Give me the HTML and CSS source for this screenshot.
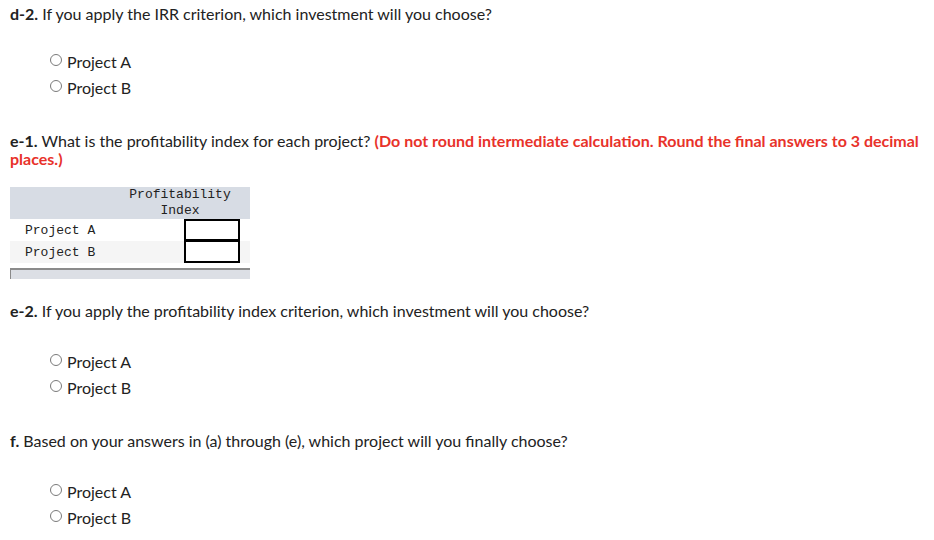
FILE: index.html
```html
<!DOCTYPE html>
<html>
<head>
<meta charset="utf-8">
<link rel="stylesheet" href="styles.css">
</head>
<body>
<div class="page">
  <p class="q q-first"><b>d-2.</b> If you apply the IRR criterion, which investment will you choose?</p>
  <div class="radios r1">
    <label class="radio"><span class="dot"></span>Project A</label>
    <label class="radio"><span class="dot"></span>Project B</label>
  </div>

  <p class="q q-e1"><b>e-1.</b> What is the profitability index for each project? <b class="red">(Do not round intermediate calculation. Round the final answers to 3 decimal places.)</b></p>
  <div class="tablewrap">
    <table class="pi">
      <colgroup><col class="c1"><col class="c2"><col class="c3"><col class="c4"></colgroup>
      <thead>
        <tr><th></th><th colspan="2">Profitability<br>Index</th><th></th></tr>
      </thead>
      <tbody>
        <tr><td class="lab" colspan="2">Project A</td><td><span class="box"></span></td><td></td></tr>
        <tr class="alt"><td class="lab" colspan="2">Project B</td><td><span class="box"></span></td><td></td></tr>
      </tbody>
    </table>
    <div class="scroll"></div>
  </div>

  <p class="q q-e2"><b>e-2.</b> If you apply the profitability index criterion, which investment will you choose?</p>
  <div class="radios r2">
    <label class="radio"><span class="dot"></span>Project A</label>
    <label class="radio"><span class="dot"></span>Project B</label>
  </div>

  <p class="q q-f"><b>f.</b> Based on your answers in (a) through (e), which project will you finally choose?</p>
  <div class="radios r2">
    <label class="radio"><span class="dot"></span>Project A</label>
    <label class="radio"><span class="dot"></span>Project B</label>
  </div>
</div>
</body>
</html>
```
FILE: styles.css
```css
html, body { margin: 0; padding: 0; background: #fff; }
body { font-family: "Lato", "Open Sans", sans-serif; color: #222; font-size: 16px; }
.page { padding: 0 10px; }
.q { margin: 0; line-height: 18px; }
.q b { font-weight: 700; }
.q-first { padding-top: 5px; }
.red { color: #e8322a; }
.radios { display: flex; flex-direction: column; padding-left: 40px; gap: 7px; }
.r1 { margin-top: 29px; }
.r2 { margin-top: 32px; }
.radio { display: flex; align-items: center; height: 19px; }
.dot { width: 12px; height: 12px; border: 1px solid #7a7a7a; border-radius: 50%; margin-right: 5px; box-sizing: border-box; margin-top: -3px; }
.q-e1 { margin-top: 35px; }
.q-e2 { margin-top: 23px; }
.q-f { margin-top: 35px; }
.tablewrap { width: 240px; margin-top: 19px; }
.pi { border-collapse: collapse; width: 240px; table-layout: fixed; font-family: "Liberation Mono", monospace; font-size: 13px; color: #222; }
.c1 { width: 110px; }
.c2 { width: 64px; }
.c3 { width: 56px; }
.c4 { width: 10px; }
.pi thead tr { background: #d7dce4; }
.pi th { font-weight: normal; height: 32px; padding: 0; line-height: 16px; text-align: center; }
.pi td { height: 22px; padding: 0; }
.pi td.lab { padding-left: 15px; vertical-align: bottom; line-height: 20px; }
.pi tr.alt { background: #f5f5f5; }
.box { display: block; width: 56px; height: 22px; border: 2px solid #000; box-sizing: border-box; background: #fff; }
.pi tr.alt .box { border-top-width: 1px; }
.scroll { margin-top: 5px; height: 11px; background: #dcdfe5; border-top: 2px solid #8a8a8a; border-left: 1px solid #8a8a8a; box-sizing: border-box; }
```
